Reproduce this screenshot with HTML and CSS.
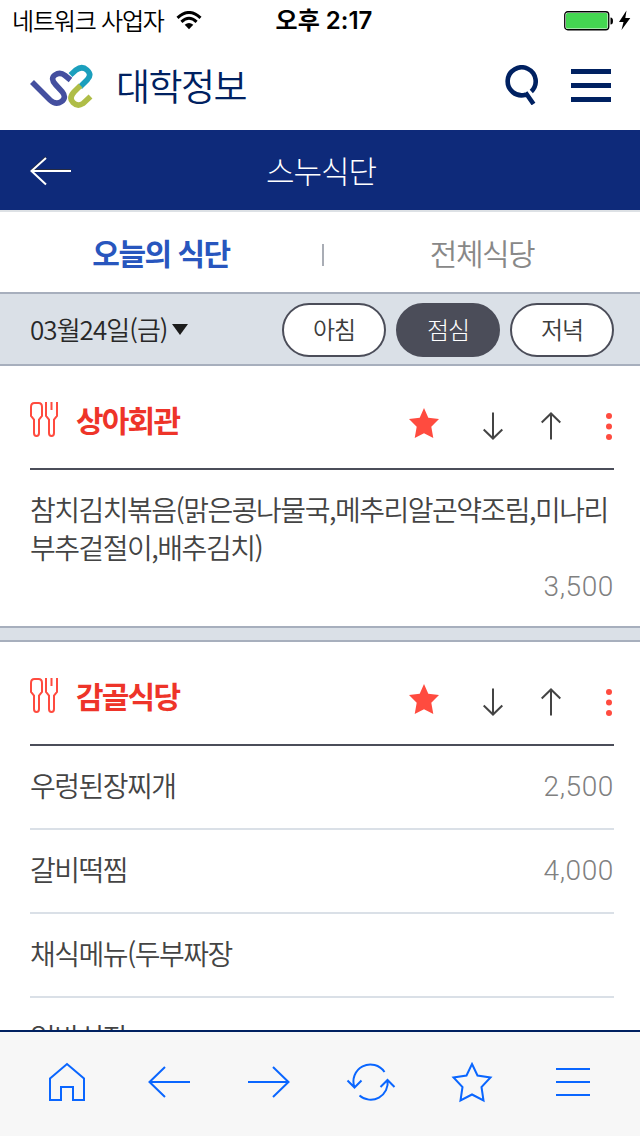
FILE: index.html
```html
<!DOCTYPE html>
<html lang="ko">
<head>
    <meta charset="UTF-8">
    <meta name="viewport" content="width=device-width, initial-scale=1.0">
    <title>스누식단</title>
    <link rel="stylesheet" href="styles.css">
</head>
<body>
    <!-- 반복 아이콘 -->
    <svg class="sprite" width="0" height="0">
        <symbol id="icon-cutlery" viewBox="0 0 30 36">
            <path d="M4.500 1h4q3.500 0 3.500 4v9l-3 3.500V31q0 3-2.500 3T4 31V17.500L1 14V5q0-4 3.500-4zM16 0v14l3 3.500V31q0 3 2.500 3t2.500-3V17.500L27 14V0M21.500 0v8"/>
        </symbol>
        <symbol id="icon-star" viewBox="0 0 30 30">
            <path d="M15 0l4.300 9.800L30 11l-7.700 7.700L24.300 30 15 25.200 5.700 30l2-11.300L0 11l10.700-1.200z"/>
        </symbol>
        <symbol id="icon-down" viewBox="0 0 20 28">
            <path d="M10 0.500v26M0.700 17.500l9.300 9 9.300-9"/>
        </symbol>
        <symbol id="icon-up" viewBox="0 0 20 28">
            <path d="M10 27.500v-26M0.700 10.500l9.300-9 9.300 9"/>
        </symbol>
        <symbol id="icon-more" viewBox="0 0 6 28">
            <circle cx="3" cy="4" r="3"/><circle cx="3" cy="14.500" r="3"/><circle cx="3" cy="25" r="3"/>
        </symbol>
    </svg>

    <div class="status-bar">
        <div class="carrier">
            <span>네트워크 사업자</span>
            <svg width="26" height="19" viewBox="0 0 26 19">
                <path d="M1.500 6.800q11.500-10.600 23 0M5.400 10.800q7.600-7 15.200 0" fill="none" stroke="#000" stroke-width="3"/>
                <path d="M8.700 13.800q4.300-3.600 8.600 0L13 18.300z"/>
            </svg>
        </div>
        <div class="clock">오후 2:17</div>
        <div class="power">
            <svg width="68" height="22" viewBox="0 0 68 22">
                <rect x="0.750" y="1.750" width="44" height="18" rx="3" fill="#fff" stroke="#000" stroke-width="1.300"/>
                <rect x="2" y="3" width="41.500" height="15.500" rx="1.500" fill="#44d651"/>
                <path d="M46.500 7.500q2.500 0 2.500 3.500t-2.500 3.500z"/>
                <path d="M62.500 0.500L55 12h4.500L57.500 20 66.300 8h-5z"/>
            </svg>
        </div>
    </div>

    <header class="app-header">
        <svg class="logo" width="64" height="46" viewBox="0 0 64 46" fill="none" stroke-width="5.600">
            <path d="M3 20L21 38Q27 43.500 32.500 39.500T33 29.500L26.500 22.500Q21 16.500 26 13T36 13.500L41.500 18" stroke="#444f9f"/>
            <path d="M41.500 13L47 8Q53 3.500 58 8T58.500 17.500L51 25" stroke="#1b9fbd"/>
            <path d="M51.500 23.500L45 30Q39.500 36 44 40.500T54 41.500L61.500 34.500" stroke="#afbd47"/>
        </svg>
        <h1>대학정보</h1>
        <div class="header-tools">
            <svg width="34" height="40" viewBox="0 0 34 40" fill="none" stroke="#002161" stroke-width="4.600">
                <path d="M27.300 26.500A14 14 0 1 0 21.500 29.800M21.500 27.500l8 11.500"/>
            </svg>
            <svg width="40" height="34" viewBox="0 0 40 34" fill="#002161">
                <path d="M0 1h40v5H0zM0 15h40v5H0zM0 29h40v5H0z"/>
            </svg>
        </div>
    </header>

    <div class="title-bar">
        <svg class="back" width="42" height="30" viewBox="0 0 42 30" fill="none" stroke-width="2">
            <path d="M16 1L1 14.500M1 14h40" stroke="#272c42"/>
            <path d="M16 2L1.500 15 16 28.500M1.500 15H41" stroke="#fff"/>
        </svg>
        <h2>스누식단</h2>
    </div>

    <nav class="tabs">
        <a class="tab active">오늘의 식단</a>
        <a class="tab">전체식당</a>
    </nav>

    <div class="filter">
        <div class="date">03월24일(금)<span class="caret"></span></div>
        <div class="meals">
            <button class="meal">아침</button>
            <button class="meal selected">점심</button>
            <button class="meal">저녁</button>
        </div>
    </div>

    <main class="content">
        <section class="restaurant">
            <div class="restaurant-head">
                <svg class="cutlery"><use href="#icon-cutlery"/></svg>
                <h3>상아회관</h3>
                <div class="actions">
                    <svg class="star"><use href="#icon-star"/></svg>
                    <svg class="arrow down"><use href="#icon-down"/></svg>
                    <svg class="arrow up"><use href="#icon-up"/></svg>
                    <svg class="more"><use href="#icon-more"/></svg>
                </div>
            </div>
            <div class="menu long">
                <p>참치김치볶음(맑은콩나물국,메추리알곤약조림,미나리<br>부추겉절이,배추김치)</p>
                <span class="price">3,500</span>
            </div>
        </section>

        <section class="restaurant">
            <div class="restaurant-head">
                <svg class="cutlery"><use href="#icon-cutlery"/></svg>
                <h3>감골식당</h3>
                <div class="actions">
                    <svg class="star"><use href="#icon-star"/></svg>
                    <svg class="arrow down"><use href="#icon-down"/></svg>
                    <svg class="arrow up"><use href="#icon-up"/></svg>
                    <svg class="more"><use href="#icon-more"/></svg>
                </div>
            </div>
            <div class="menu"><p>우렁된장찌개</p><span class="price">2,500</span></div>
            <div class="menu"><p>갈비떡찜</p><span class="price">4,000</span></div>
            <div class="menu"><p>채식메뉴(두부짜장</p></div>
            <div class="menu"><p>일반식장</p></div>
        </section>
    </main>

    <footer class="toolbar">
        <svg width="39" height="42" viewBox="0 0 39 42"><path d="M2 17.500L19 3l17 14.500V39H25V26H13v13H2z"/></svg>
        <svg width="42" height="42" viewBox="0 0 42 42"><path d="M17 6L1.500 21 17 36M1.500 21H42"/></svg>
        <svg width="43" height="42" viewBox="0 0 43 42"><path d="M25 6l15.500 15L25 36M40.500 21H0"/></svg>
        <svg width="50" height="42" viewBox="0 0 50 42"><path d="M38.500 11A17 17 0 0 0 8.500 26.500M1.500 19.500l7 7 7-7M13.500 34.500A17 17 0 0 0 41.500 19M34.500 26l7-7 7 7"/></svg>
        <svg width="42" height="42" viewBox="0 0 42 42"><path d="M21 3l5.500 11.500 13 2-9 9.500 2 13.500L21 33.500 9.500 39.500l2-13.500-9-9.500 13-2z"/></svg>
        <svg width="34" height="42" viewBox="0 0 34 42"><path d="M0 8h34M0 21h34M0 34h34"/></svg>
    </footer>
</body>
</html>
```
FILE: styles.css
```css
* {
    margin: 0;
    padding: 0;
    box-sizing: border-box;
}

body {
    width: 640px;
    height: 1136px;
    display: flex;
    flex-direction: column;
    overflow: hidden;
    background: #fff;
    color: #444;
    font-family: 'Noto Sans CJK KR', sans-serif;
    font-weight: 350;
}

svg {
    display: block;
    flex-shrink: 0;
}

.sprite {
    position: absolute;
}

/* 상태 표시줄 */
.status-bar {
    flex: 0 0 40px;
    display: grid;
    grid-template-columns: 1fr auto 1fr;
    align-items: center;
    padding: 0 8px 0 12px;
    color: #000;
    font-size: 24px;
    line-height: 38px;
}

.carrier {
    display: flex;
    align-items: center;
    gap: 12px;
    letter-spacing: -1.2px;
}

.clock {
    padding: 2px 0 0 4px;
    font-family: Inter, 'Noto Sans CJK KR', sans-serif;
    font-weight: 600;
}

.power {
    justify-self: end;
    padding-top: 1px;
}

.app-header {
    flex: 0 0 90px;
    display: flex;
    align-items: center;
    padding: 0 29px 0 29px;
}

.app-header h1 {
    margin-left: 23px;
    color: #002161;
    font-size: 37px;
    font-weight: 350;
    letter-spacing: -1.5px;
    line-height: 88px;
}

.header-tools {
    display: flex;
    align-items: center;
    gap: 33px;
    margin-left: auto;
}

.title-bar {
    flex: 0 0 80px;
    display: grid;
    grid-template-columns: 42px 1fr 42px;
    align-items: center;
    padding: 0 28px 0 30px;
    background: #0e2a7a;
    color: #fff;
}

.back {
    margin-top: 1px;
}

.title-bar h2 {
    text-align: center;
    font-size: 31px;
    font-weight: 300;
    letter-spacing: -1px;
    line-height: 76px;
}

.tabs {
    flex: 0 0 82px;
    display: flex;
    align-items: center;
    border-top: 2px solid #dde1e5;
    font-size: 30px;
    letter-spacing: -1.5px;
    line-height: 76px;
    color: #888;
}

.tab {
    flex: 1;
    text-align: center;
}

.tab.active {
    flex: 0 0 322px;
    font-weight: 700;
    color: #2856be;
}

.tab + .tab::before {
    content: "";
    float: left;
    width: 2px;
    height: 22px;
    margin-top: 30px;
    background: #a9adb5;
}

.filter {
    flex: 0 0 74px;
    display: flex;
    align-items: center;
    justify-content: space-between;
    padding: 0 26px 0 30px;
    background: #dae0e7;
    border-top: 2px solid #a7afbd;
    border-bottom: 2px solid #a7afbd;
}

.date {
    display: flex;
    align-items: center;
    font-size: 26px;
    letter-spacing: -0.95px;
    line-height: 68px;
    color: #282828;
}

.caret {
    margin-left: 4px;
    border: 8px solid transparent;
    border-top: 11px solid #1c1c1c;
    border-bottom: 0;
}

.meals {
    display: flex;
    gap: 10px;
    padding-top: 2px;
}

.meal {
    width: 104px;
    height: 54px;
    border: 2px solid #4b4d59;
    border-radius: 27px;
    background: #fff;
    color: #3c3c3c;
    font: inherit;
    font-size: 24px;
    letter-spacing: -1px;
    line-height: 46px;
    padding-bottom: 3px;
}

.meal.selected {
    background: #4b4d59;
    color: #fff;
    font-weight: 300;
}

/* 식당별 메뉴 */
.content {
    flex: 1;
    min-height: 0;
    overflow: hidden;
}

.restaurant {
    padding: 0 26px 0 30px;
}

.restaurant + .restaurant {
    border-top: 2px solid #a7afbd;
}

.restaurant + .restaurant::before {
    content: "";
    display: block;
    height: 12px;
    margin: 0 -26px 0 -30px;
    background: #dae0e7;
    border-bottom: 2px solid #a7afbd;
}

.restaurant-head {
    display: flex;
    height: 104px;
    border-bottom: 2px solid #4b4d59;
}

.cutlery {
    width: 30px;
    height: 36px;
    margin-top: 36px;
    fill: none;
    stroke: #ff4b3f;
    stroke-width: 2;
}

.restaurant-head h3 {
    margin-left: 16px;
    color: #ee3429;
    font-size: 30px;
    font-weight: 700;
    letter-spacing: -1.8px;
    line-height: 106px;
}

.actions {
    display: flex;
    align-items: flex-start;
    margin-left: auto;
    padding: 42px 2px 0 0;
}

.star {
    width: 30px;
    height: 30px;
    fill: #ff4b3f;
}

.arrow {
    width: 20px;
    height: 28px;
    margin-top: 4px;
    fill: none;
    stroke: #444;
    stroke-width: 2;
}

.down {
    margin-left: 44px;
}

.up {
    margin-left: 38px;
}

.more {
    width: 6px;
    height: 28px;
    margin: 4px 0 0 45px;
    fill: #ff4b3f;
}

.menu {
    display: flex;
    justify-content: space-between;
    height: 84px;
    border-bottom: 2px solid #dae0e7;
    font-size: 28px;
    letter-spacing: -1.5px;
    line-height: 78px;
}

.menu.long {
    display: block;
    height: 156px;
    padding-top: 20px;
    border-bottom: 0;
    line-height: 38px;
}

.price {
    display: block;
    padding-top: 2px;
    text-align: right;
    color: #808080;
    font-family: Roboto, 'Liberation Sans', sans-serif;
    font-weight: 300;
    letter-spacing: 0.6px;
}

/* 하단 툴바 */
.toolbar {
    flex: 0 0 106px;
    display: grid;
    grid-template-columns: repeat(6, 101px);
    justify-content: center;
    justify-items: center;
    padding-top: 29px;
    background: #f7f7f7;
    border-top: 2px solid #002161;
    fill: none;
    stroke: #0a66ff;
    stroke-width: 2;
}
```
